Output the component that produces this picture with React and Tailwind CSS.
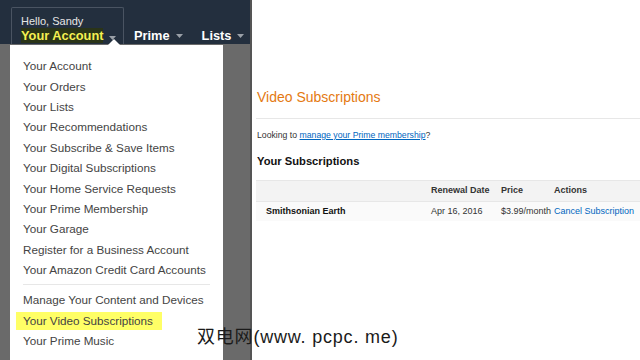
const menuGroups = [
  [
    'Your Account',
    'Your Orders',
    'Your Lists',
    'Your Recommendations',
    'Your Subscribe & Save Items',
    'Your Digital Subscriptions',
    'Your Home Service Requests',
    'Your Prime Membership',
    'Your Garage',
    'Register for a Business Account',
    'Your Amazon Credit Card Accounts',
  ],
  ['Manage Your Content and Devices', 'Your Video Subscriptions', 'Your Prime Music'],
];

function Caret({ className }) {
  return (
    <svg className={className} width="7" height="4" viewBox="0 0 7 4" fill="currentColor">
      <path d="M0 0h7L3.5 4z" />
    </svg>
  );
}

function NavBar() {
  return (
    <div className="h-[44px] bg-[#232f3e] flex items-end pl-[11px]">
      <div className="relative w-[113px] h-[37px] border border-[#4a5462] border-b-0 rounded-t-[2px] pl-[9px] pt-[7px]">
        <div className="text-[11px] leading-[13px] text-[#e6e6e6]">Hello, Sandy</div>
        <div className="flex items-center gap-[6px]">
          <span className="text-[12.8px] leading-[15px] font-bold text-[#f5f052] bg-[#2a3418]">Your Account</span>
          <Caret className="text-[#9aa0a8] mt-[4px]" />
        </div>
        {/* notch of the dropdown */}
        <div className="absolute left-[96px] -bottom-[1px] w-0 h-0 border-x-[6px] border-x-transparent border-b-[6px] border-b-white" />
      </div>
      <div className="flex items-center gap-[6px] ml-[10px] -mb-[1px]">
        <span className="text-[12.8px] font-bold text-white">Prime</span>
        <Caret className="text-[#9aa0a8] mt-[2px]" />
      </div>
      <div className="flex items-center gap-[6px] ml-[19px] -mb-[1px]">
        <span className="text-[12.8px] font-bold text-white">Lists</span>
        <Caret className="text-[#9aa0a8] mt-[2px]" />
      </div>
    </div>
  );
}

function Dropdown() {
  return (
    <div className="ml-[10px] mt-[1px] w-[213px] flex-1 bg-white pt-[11px] pl-[6px]">
      {menuGroups.map((group, gi) => (
        <div key={gi} className={gi > 0 ? 'border-t border-[#e7e7e7] mt-[4px] pt-[5px] ml-[7px] -mr-[6px] w-[187px]' : ''}>
          {group.map((item) => (
            <div key={item} className={'h-[20.4px] flex items-center ' + (gi > 0 ? '-ml-[7px]' : '')}>
              <span
                className={
                  'whitespace-nowrap text-[11.7px] leading-[18px] text-[#444] px-[7px] ' +
                  (item === 'Your Video Subscriptions' ? 'bg-[#ffff66] pr-[9px]' : '')
                }
              >
                {item}
              </span>
            </div>
          ))}
        </div>
      ))}
    </div>
  );
}

function Subscriptions() {
  return (
    <div className="flex-1 bg-white pl-[4px] pt-[87px] border-l-[2px] border-[#555]">
      <h1 className="text-[14px] leading-[20px] text-[#e47911] pl-[1px]">Video Subscriptions</h1>
      <div className="border-t border-[#e7e7e7] mt-[11px]" />
      <p className="text-[8.7px] mt-[10px] text-[#333] pl-[1px]">
        Looking to <a className="text-[#0066c0] underline">manage your Prime membership</a>?
      </p>
      <h2 className="text-[11.2px] font-bold text-[#111] mt-[11px] pl-[1px]">Your Subscriptions</h2>
      <div className="mt-[10px] text-[9px]">
        <div className="flex items-center h-[22px] bg-[#f3f3f3] border-y border-[#e7e7e7] font-bold text-[#333]">
          <span className="w-[175px]" />
          <span className="w-[70px]">Renewal Date</span>
          <span className="w-[53px]">Price</span>
          <span>Actions</span>
        </div>
        <div className="flex items-center h-[19px] text-[#333] bg-[#fafafa]">
          <span className="w-[175px] pl-[10px] font-bold text-[#111]">Smithsonian Earth</span>
          <span className="w-[70px]">Apr 16, 2016</span>
          <span className="w-[53px]">$3.99/month</span>
          <span className="text-[#0066c0]">Cancel Subscription</span>
        </div>
      </div>
    </div>
  );
}

export default function App() {
  return (
    <div
      className="relative w-[640px] h-[360px] overflow-hidden flex"
      style={{ fontFamily: '"Liberation Sans", Arial, sans-serif' }}
    >
      <div className="w-[250px] bg-[#6a6a6a] flex flex-col">
        <NavBar />
        <Dropdown />
      </div>
      <Subscriptions />
      {/* watermark */}
      <div
        className="absolute left-[197px] top-[325px] text-[18px] leading-[24px] tracking-[0.8px] text-[#1a1a1a] whitespace-nowrap"
        style={{ fontFamily: '"Liberation Sans", "Noto Sans CJK SC", sans-serif' }}
      >
        双电网(www. pcpc. me)
      </div>
    </div>
  );
}
